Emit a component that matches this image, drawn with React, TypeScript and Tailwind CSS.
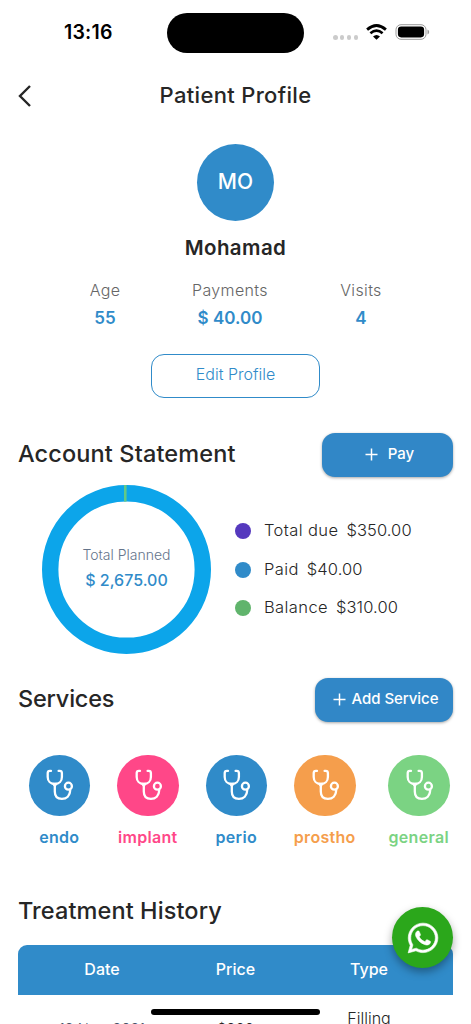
import React from 'react';
import { FaWhatsapp } from 'react-icons/fa';

const services = [
    { name: 'endo', bg: 'bg-[#308bc9]', text: 'text-[#308bc9]' },
    { name: 'implant', bg: 'bg-[#ff4788]', text: 'text-[#ff4788]' },
    { name: 'perio', bg: 'bg-[#308bc9]', text: 'text-[#308bc9]' },
    { name: 'prostho', bg: 'bg-[#f59e4c]', text: 'text-[#f59e4c]' },
    { name: 'general', bg: 'bg-[#7bd383]', text: 'text-[#7bd383]' },
];

const legend = [
    { label: 'Total due', value: '$350.00', dot: 'bg-[#5539be]' },
    { label: 'Paid', value: '$40.00', dot: 'bg-[#308bc9]' },
    { label: 'Balance', value: '$310.00', dot: 'bg-[#60b46c]' },
];

const Stethoscope = () => (
    <svg width="32" height="32" viewBox="0 0 32 32" fill="none" stroke="white" strokeWidth="2.3" strokeLinecap="round" strokeLinejoin="round">
        <path d="M8 1.9H6.9Q4.7 1.9 4.7 4.1V8C4.7 12 7.5 15 11.8 15C16.1 15 18.9 12 18.9 8V4.1Q18.9 1.9 16.7 1.9H15.6" />
        <path d="M11.8 15.4V22.5C11.8 27.2 14.6 29.9 18.9 29.9C23.6 29.9 27 26.8 27.2 21.4" />
        <path d="M9.3 14.6L11.8 18L14.3 14.6Z" fill="white" strokeWidth="1" />
        <circle cx="25.4" cy="17.2" r="3.5" />
    </svg>
);

const Plus = () => (
    <svg width="13" height="13" viewBox="0 0 13 13" stroke="white" strokeWidth="1.5">
        <path d="M6.5 .5V12.5M.5 6.5H12.5" />
    </svg>
);

const StatusBar = () => (
    <div className="relative flex h-[66px] items-center justify-between pl-[64px] pr-[41px] text-black">
        <span className="text-[19.5px] font-semibold tracking-[0.2px]">13:16</span>
        <div className="absolute left-[167px] top-[13px] h-[40px] w-[137px] rounded-full bg-black" />
        <div className="flex items-center">
            <div className="mr-[8px] mt-[9px] flex gap-[2.6px]">
                {[0, 1, 2, 3].map((i) => (
                    <span key={i} className="size-[4.2px] rounded-full bg-[#cbcbcb]" />
                ))}
            </div>
            <svg width="21" height="16" viewBox="0 0 21 16" className="mb-[2px] mr-[8px]">
                <path d="M1.1 5.6Q10.5-2.6 19.9 5.6" fill="none" stroke="#000" strokeWidth="2.8" />
                <path d="M4.4 9.2Q10.5 4 16.6 9.2" fill="none" stroke="#000" strokeWidth="2.6" />
                <path d="M7 12.5Q10.5 9.4 14 12.5L10.5 15.8Z" />
            </svg>
            <svg width="35" height="16" viewBox="0 0 35 16" className="mb-[2px]">
                <rect x="1" y=".7" width="30" height="14.6" rx="5" fill="none" stroke="#9a9a9a" />
                <rect x="2.9" y="2.6" width="26.2" height="10.8" rx="3.3" />
                <path d="M32.5 5.5Q34.2 6.2 34.2 8T32.5 10.5Z" fill="#9a9a9a" />
            </svg>
        </div>
    </div>
);

export default function App() {
    return (
        <div className="relative h-[1024px] w-[471px] overflow-hidden bg-white font-['Inter',sans-serif] text-[#262626]">
            <StatusBar />

            {/* Title bar */}
            <header className="relative flex h-[60px] items-center justify-center pb-[2px]">
                <svg width="14" height="22" viewBox="0 0 14 22" className="absolute left-[18px] top-[19px]" fill="none" stroke="#262626" strokeWidth="2.4">
                    <path d="M12 1L2 11L12 21" />
                </svg>
                <h1 className="text-[22px] font-medium leading-[30px] tracking-[0.33px]">Patient Profile</h1>
            </header>

            {/* Patient */}
            <section className="flex flex-col items-center pt-[18px]">
                <div className="flex size-[77px] items-center justify-center rounded-full bg-[#308bc9] pb-[2px] text-[21px] font-medium text-white">MO</div>
                <h2 className="mt-[13px] text-[20.5px] font-semibold leading-[28px] tracking-[0.4px]">Mohamad</h2>
                <div className="mt-[17px] flex h-[55px] w-full pl-[55px] text-center">
                    {[
                        ['Age', '55', 'w-[100px]'],
                        ['Payments', '$ 40.00', 'w-[150px]'],
                        ['Visits', '4', 'w-[112px]'],
                    ].map(([label, value, width]) => (
                        <div key={label} className={width}>
                            <p className="text-[16px] font-light leading-[22px] tracking-[0.35px] text-[#666]">{label}</p>
                            <p className="mt-[5px] text-[17px] font-semibold leading-[24px] text-[#308bc9]">{value}</p>
                        </div>
                    ))}
                </div>
                <button className="mt-[20px] h-[44px] w-[169px] rounded-[13px] border-[1.4px] border-[#308bc9] pb-[4px] text-[16px] font-light text-[#308bc9]">Edit Profile</button>
            </section>

            {/* Account statement */}
            <section className="pt-[35px]">
                <div className="flex h-[44px] items-center justify-between px-[18px]">
                    <h2 className="pb-[2px] text-[23.5px] font-medium tracking-[0.13px]">Account Statement</h2>
                    <button className="flex h-[44px] w-[131px] items-center justify-center gap-[10px] rounded-[13px] bg-[#3187c7] pb-[2px] pl-[4px] text-[15px] font-medium text-white shadow-[0_1px_3px_rgba(0,0,0,0.35)]">
                        <Plus />
                        <span>Pay</span>
                    </button>
                </div>
                <div className="mt-[8px] flex pl-[42px]">
                    <div className="relative size-[169px]">
                        <svg width="169" height="169" viewBox="0 0 169 169">
                            <circle cx="84.5" cy="84.5" r="76.3" fill="none" stroke="#0ca5ea" strokeWidth="16.4" />
                            <path d="M83.3 0V16.6" stroke="#62c987" strokeWidth="2.6" />
                        </svg>
                        <div className="absolute inset-0 flex flex-col items-center pt-[60px]">
                            <span className="text-[14px] font-light leading-[20px] text-[#64748b]">Total Planned</span>
                            <span className="mt-[3px] text-[16px] font-medium leading-[24px] text-[#308bc9]">$ 2,675.00</span>
                        </div>
                    </div>
                    <ul className="ml-[24px] mt-[27px]">
                        {legend.map((l) => (
                            <li key={l.label} className="flex h-[38.5px] items-center">
                                <span className={`mr-[13px] size-[16px] rounded-full ${l.dot}`} />
                                <span className="pb-[1px] text-[16.5px] font-light tracking-[0.4px]">{l.label}</span>
                                <span className="ml-[8px] pb-[1px] text-[16.5px] font-light tracking-[0.1px]">{l.value}</span>
                            </li>
                        ))}
                    </ul>
                </div>
            </section>

            {/* Services */}
            <section className="pt-[24px]">
                <div className="flex h-[44px] items-center justify-between px-[18px]">
                    <h2 className="pb-[2px] text-[23.5px] font-medium tracking-[-0.2px]">Services</h2>
                    <button className="flex h-[44px] w-[138px] items-center justify-center gap-[6px] rounded-[13px] bg-[#3187c7] pb-[2px] pl-[3px] text-[15px] font-medium tracking-[-0.05px] text-white shadow-[0_1px_3px_rgba(0,0,0,0.35)]">
                        <Plus />
                        <span>Add Service</span>
                    </button>
                </div>
                <div className="mt-[32.5px] flex pl-[15px]">
                    {services.map((s) => (
                        <div key={s.name} className="flex w-[88.5px] flex-col items-center last:ml-[5.5px]">
                            <div className={`flex size-[61.5px] items-center justify-center rounded-full ${s.bg}`}>
                                <Stethoscope />
                            </div>
                            <span className={`mt-[9px] text-[16px] font-semibold leading-[24px] tracking-[0.3px] ${s.text}`}>{s.name}</span>
                        </div>
                    ))}
                </div>
            </section>

            {/* Treatment history */}
            <section className="px-[18px] pt-[45px]">
                <h2 className="text-[23.5px] font-medium leading-[34px] tracking-[0.1px]">Treatment History</h2>
                <div className="mt-[17px] grid h-[50px] grid-cols-[168px_99px_168px] items-center rounded-t-[9px] bg-[#308bc9] pb-[3px] text-center text-[16px] font-medium text-white">
                    <span>Date</span>
                    <span>Price</span>
                    <span>Type</span>
                </div>
                <div className="grid grid-cols-[168px_99px_168px] pt-[11px] text-center text-[16px] font-light leading-[24px]">
                    <span className="pt-[11px] text-[14.5px] text-[#475569]">12 Nov, 2021</span>
                    <span className="pt-[11px] text-[15px]">$200</span>
                    <span>Filling</span>
                </div>
            </section>

            <button className="absolute left-[392px] top-[907px] flex size-[61px] items-center justify-center rounded-full bg-[#2ba71b] text-white shadow-[0_4px_9px_rgba(0,0,0,0.35)]">
                <FaWhatsapp size={34} stroke="white" strokeWidth={9} />
            </button>

            {/* Home indicator */}
            <div className="absolute left-[151px] top-[1009px] h-[6px] w-[169px] rounded-full bg-black" />
        </div>
    );
}
